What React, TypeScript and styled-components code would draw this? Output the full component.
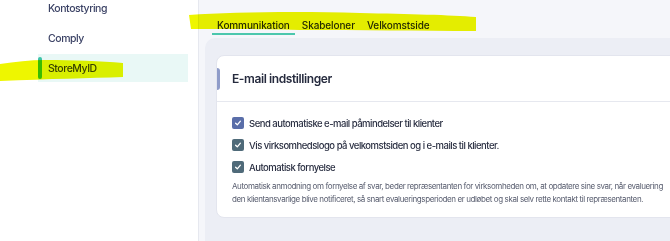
import * as React from "react";
import styled, { createGlobalStyle } from "styled-components";

const GlobalStyle = createGlobalStyle`
  html, body {
    margin: 0;
    padding: 0;
    background: #ffffff;
  }
  body {
    font-family: Inter, "Noto Sans", "Liberation Sans", sans-serif;
  }
`;

const Page = styled.div`
  position: relative;
  display: flex;
  width: 670px;
  height: 241px;
  overflow: hidden;
`;

const Sidebar = styled.nav`
  width: 198px;
  flex-shrink: 0;
  background: #ffffff;
  border-right: 1px solid #e6e8ef;
`;

const NavList = styled.ul`
  list-style: none;
  margin: -6px 0 0 38px;
  padding: 0;
`;

type TNavItem = {
  active?: boolean;
};

const NavItem = styled.li<TNavItem>`
  position: relative;
  width: 150px;
  height: 28px;
  margin-bottom: 2px;
  padding-left: 10px;
  box-sizing: border-box;
  display: flex;
  align-items: center;
  font-size: 10.5px;
  font-weight: 500;
  letter-spacing: -0.45px;
  color: #3b4265;
  background: ${props => (props.active ? "#e9f8f6" : "transparent")};

  &::before {
    content: "";
    display: ${props => (props.active ? "block" : "none")};
    position: absolute;
    left: 0;
    top: 3px;
    bottom: 3px;
    width: 4px;
    border-radius: 2px;
    background: #3cc3a8;
  }
`;

const Main = styled.main`
  flex: 1;
  display: flex;
  flex-direction: column;
  background: #f5f6fa;
  overflow: hidden;
`;

const TabBar = styled.div`
  height: 35px;
  display: flex;
  align-items: flex-end;
  gap: 2px;
  padding-left: 13px;
`;

type TTab = {
  selected?: boolean;
};

const Tab = styled.div<TTab>`
  padding: 0 5px 1px;
  line-height: 14px;
  font-size: 10px;
  font-weight: 500;
  letter-spacing: -0.1px;
  color: #262b40;
  border-bottom: 2px solid ${props => (props.selected ? "#4cc7ad" : "transparent")};
`;

const Panel = styled.section`
  flex: 1;
  margin: 3px 0 0 6px;
  padding: 17px 0 0 11px;
  background: #eceef5;
  border-radius: 10px 0 0 0;
`;

const Card = styled.div`
  width: 620px;
  height: 163px;
  box-sizing: border-box;
  background: #ffffff;
  border: 1px solid #e3e5ee;
  border-radius: 8px 0 0 8px;
  overflow: hidden;
`;

const CardHeader = styled.div`
  position: relative;
  height: 45px;
  display: flex;
  align-items: center;
  padding-left: 15px;
  border-bottom: 1px solid #e6e8ef;
  font-size: 12px;
  letter-spacing: -0.4px;
  font-weight: 600;
  color: #262b3e;

  &::before {
    content: "";
    position: absolute;
    left: -1px;
    top: 12px;
    width: 4px;
    height: 22px;
    border-radius: 0 3px 3px 0;
    background: #8f9cc9;
  }
`;

const CardBody = styled.div`
  padding: 10px 15px 0;
`;

const CheckRow = styled.label`
  height: 22px;
  display: flex;
  align-items: center;
  gap: 5px;
  font-size: 9.5px;
  font-weight: 500;
  letter-spacing: -0.5px;
  color: #2a2f42;
`;

type TBox = {
  tone: string;
};

const Box = styled.span<TBox>`
  width: 12px;
  height: 12px;
  border-radius: 2px;
  background: ${props => props.tone};
  display: flex;
  align-items: center;
  justify-content: center;
`;

const Description = styled.p`
  margin: 2px 0 0;
  font-size: 8px;
  letter-spacing: -0.4px;
  line-height: 13px;
  color: #575c6e;
  white-space: nowrap;
`;

const Highlights = styled.svg`
  position: absolute;
  left: 0;
  top: 0;
  pointer-events: none;
  mix-blend-mode: multiply;
`;

const Check = ({ tone }: { tone: string }) => (
  <Box tone={tone}>
    <svg width="8" height="8" viewBox="0 0 8 8">
      <path d="M1.6 4.2 L3.3 5.8 L6.4 2.2" fill="none" stroke="#ffffff" strokeWidth="1.3" strokeLinecap="round" strokeLinejoin="round" />
    </svg>
  </Box>
);

const options = [
  { label: "Send automatiske e-mail påmindelser til klienter", tone: "#5a6ea9" },
  { label: "Vis virksomhedslogo på velkomstsiden og i e-mails til klienter.", tone: "#4f6a79" },
  { label: "Automatisk fornyelse", tone: "#4f6a79" }
];

export default function App() {
  return (
    <Page>
      <GlobalStyle />
      <Sidebar>
        <NavList>
          <NavItem>Kontostyring</NavItem>
          <NavItem>Comply</NavItem>
          <NavItem active>StoreMyID</NavItem>
        </NavList>
      </Sidebar>
      <Main>
        <TabBar>
          <Tab selected>Kommunikation</Tab>
          <Tab>Skabeloner</Tab>
          <Tab>Velkomstside</Tab>
        </TabBar>
        <Panel>
          <Card>
            <CardHeader>E-mail indstillinger</CardHeader>
            <CardBody>
              {options.map(o => (
                <CheckRow key={o.label}>
                  <Check tone={o.tone} />
                  {o.label}
                </CheckRow>
              ))}
              <Description>
                Automatisk anmodning om fornyelse af svar, beder repræsentanten for virksomheden om, at opdatere sine svar, når evaluering
                <br />
                den klientansvarlige blive notificeret, så snart evalueringsperioden er udløbet og skal selv rette kontakt til repræsentanten.
              </Description>
            </CardBody>
          </Card>
        </Panel>
      </Main>
      <Highlights width="670" height="241" viewBox="0 0 670 241">
        <path
          d="M189 15 C230 12 300 11 360 13 C410 14 450 15 476 17 L476 31 C420 31 360 30 300 30 C250 29 215 29 191 29 Z"
          fill="#eef600"
        />
        <path
          d="M0 64 C15 62 30 60 45 60 C75 60 100 61 123 63 L123 77 C90 78 50 79 0 81 Z"
          fill="#eef600"
        />
      </Highlights>
    </Page>
  );
}
